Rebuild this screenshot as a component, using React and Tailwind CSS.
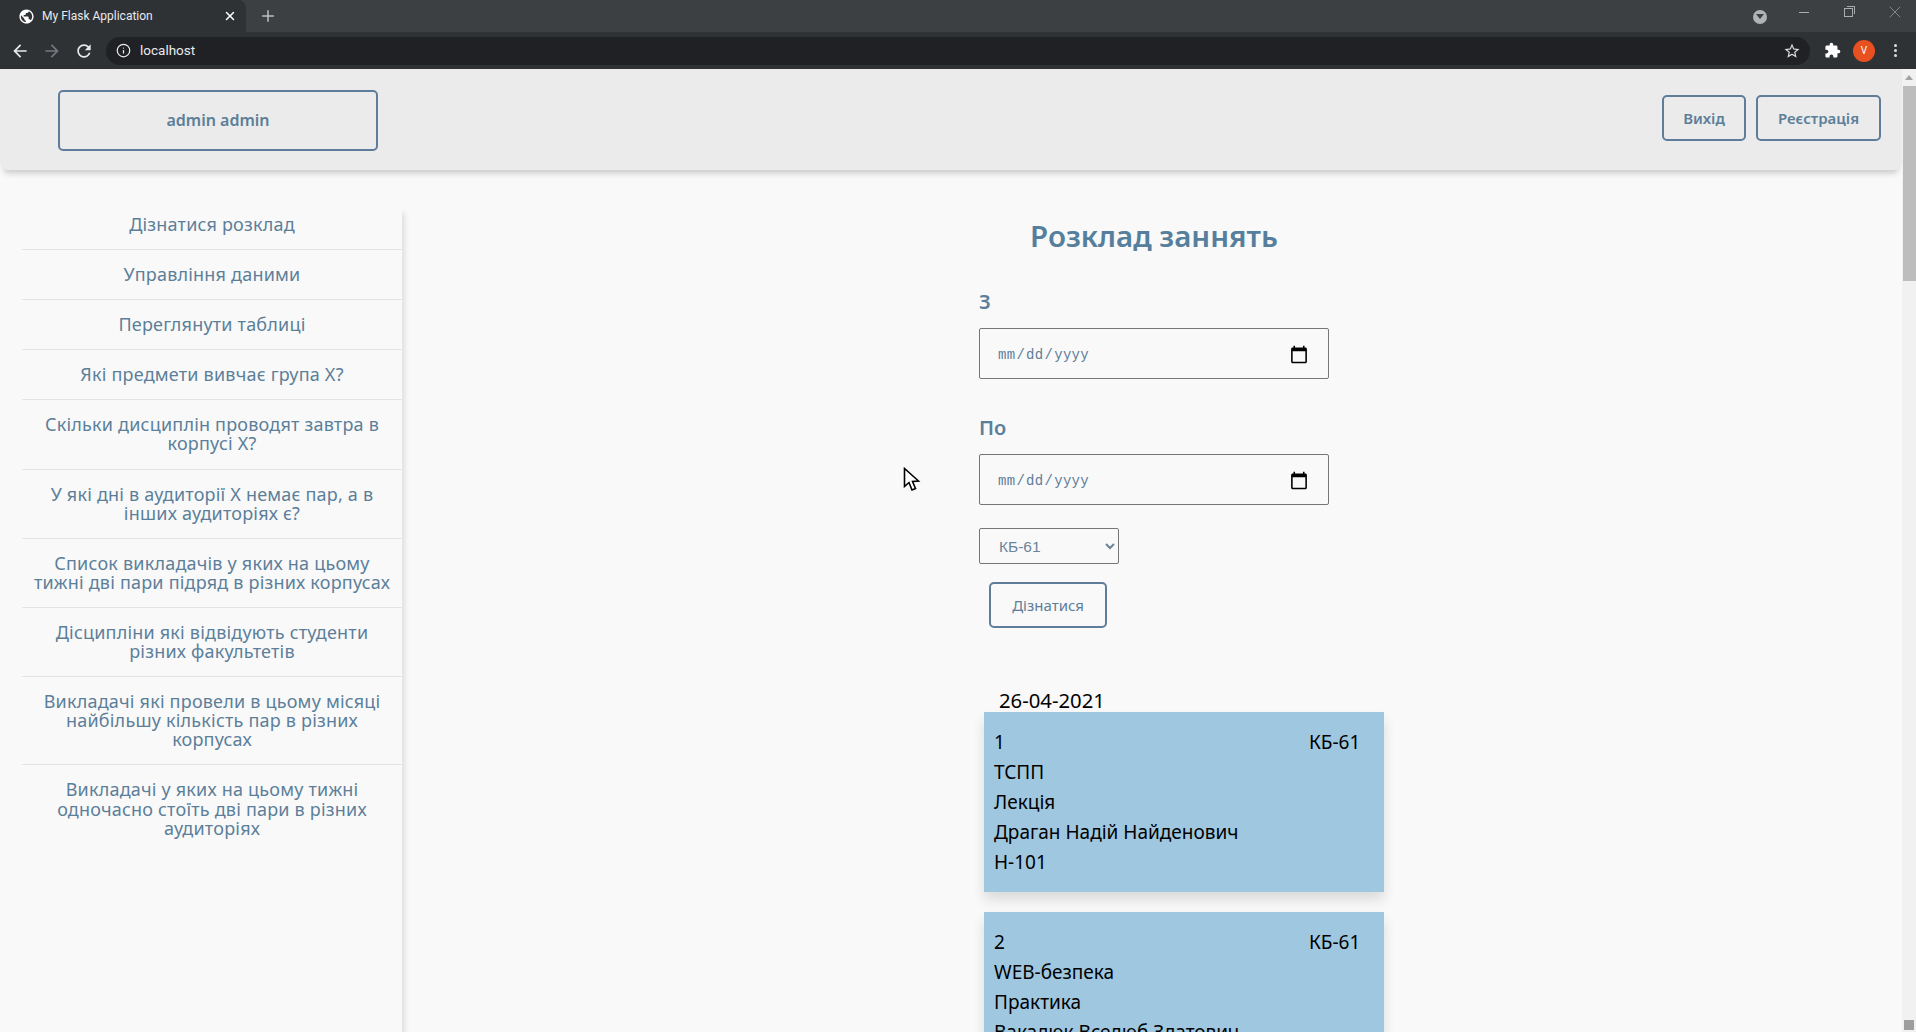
import React from "react";
import { Info, Plus, X } from "lucide-react";

const menu = [
  "Дізнатися розклад",
  "Управління даними",
  "Переглянути таблиці",
  "Які предмети вивчає група Х?",
  "Скільки дисциплін проводят завтра в корпусі Х?",
  "У які дні в аудиторії Х немає пар, а в інших аудиторіях є?",
  "Список викладачів у яких на цьому тижні дві пари підряд в різних корпусах",
  "Дісципліни які відвідують студенти різних факультетів",
  "Викладачі які провели в цьому місяці найбільшу кількість пар в різних корпусах",
  "Викладачі у яких на цьому тижні одночасно стоїть дві пари в різних аудиторіях",
];

const lessons = [
  { num: "1", lines: ["ТСПП", "Лекція", "Драган Надій Найденович", "Н-101"] },
  { num: "2", lines: ["WEB-безпека", "Практика", "Вакалюк Вселюб Златович", "Н-101"] },
];

const Glyph = ({ d, className }) => (
  <svg viewBox="0 0 24 24" className={className} fill="currentColor">
    <path d={d} />
  </svg>
);

const ARROW = "M20 11H7.83l5.59-5.59L12 4l-8 8 8 8 1.41-1.41L7.83 13H20v-2z";
const REFRESH = "M17.65 6.35C16.2 4.9 14.21 4 12 4c-4.42 0-7.99 3.58-7.99 8s3.57 8 7.99 8c3.73 0 6.84-2.55 7.73-6h-2.08c-.82 2.33-3.04 4-5.65 4-3.31 0-6-2.69-6-6s2.69-6 6-6c1.66 0 3.14.69 4.22 1.78L13 11h7V4l-2.35 2.35z";
const GLOBE = "M12 2C6.48 2 2 6.48 2 12s4.48 10 10 10 10-4.48 10-10S17.52 2 12 2zm-1 17.93c-3.95-.49-7-3.85-7-7.93 0-.62.08-1.21.21-1.79L9 15v1c0 1.1.9 2 2 2v1.93zm6.9-2.54c-.26-.81-1-1.39-1.9-1.39h-1v-3c0-.55-.45-1-1-1H8v-2h2c.55 0 1-.45 1-1V7h2c1.1 0 2-.9 2-2v-.41c2.93 1.19 5 4.06 5 7.41 0 2.08-.8 3.97-2.1 5.39z";
const PUZZLE = "M20.5 11H19V7c0-1.1-.9-2-2-2h-4V3.5C13 2.12 11.88 1 10.5 1S8 2.12 8 3.5V5H4c-1.1 0-1.99.9-1.99 2v3.8H3.5c1.49 0 2.7 1.21 2.7 2.7s-1.21 2.7-2.7 2.7H2V20c0 1.1.9 2 2 2h3.8v-1.5c0-1.49 1.21-2.7 2.7-2.7 1.49 0 2.7 1.21 2.7 2.7V22H17c1.1 0 2-.9 2-2v-4h1.5c1.38 0 2.5-1.12 2.5-2.5S21.88 11 20.5 11z";
const STAR = "M22 9.24l-7.19-.62L12 2 9.19 8.63 2 9.24l5.46 4.73L5.82 21 12 17.27 18.18 21l-1.63-7.03L22 9.24zM12 15.4l-3.76 2.27 1-4.28-3.32-2.88 4.38-.38L12 6.1l1.71 4.04 4.38.38-3.32 2.88 1 4.28L12 15.4z";

const BrowserChrome = () => (
  <div className="font-['Roboto',sans-serif] text-white">
    <div className="h-8 bg-[#3c4043] flex items-end">
      <div className="w-[246px] h-[32px] bg-[#2f3235] rounded-tr-lg flex items-center pl-[18px] pr-[9px] gap-[7px]">
        <Glyph d={GLOBE} className="w-[17px] h-[17px] text-white shrink-0" />
        <span className="text-[12px] flex-1 text-[#e8eaed] whitespace-nowrap">My Flask Application</span>
        <X className="w-[14px] h-[14px]" strokeWidth={2.5} />
      </div>
      <Plus className="w-[18px] h-[18px] ml-[13px] mb-[7px] text-[#bdc1c6]" strokeWidth={2} />
      <div className="ml-auto h-8 flex items-center text-[#a9abae]">
        <div className="w-[14px] h-[14px] rounded-full bg-[#b0b2b5] flex items-center justify-center mr-[32px] mt-[1px]">
          <div className="w-0 h-0 border-l-[4px] border-r-[4px] border-t-[5px] border-l-transparent border-r-transparent border-t-[#3c4043]" />
        </div>
        <div className="w-[10px] h-px bg-[#a9abae] mr-[35px] -mt-[8px]" />
        <div className="relative w-[9px] h-[9px] border border-[#a9abae] mr-[32px] -mt-[7px]">
          <div className="absolute -top-[3px] -right-[3px] w-[8px] h-[8px] border-t border-r border-[#a9abae]" />
        </div>
        <X className="w-[20px] h-[20px] mr-[11px] -mt-[8px]" strokeWidth={0.8} />
      </div>
    </div>
    <div className="h-[37px] bg-[#2f3235] flex items-center">
      <Glyph d={ARROW} className="w-[20px] h-[20px] ml-[10px] text-[#e8eaed]" />
      <Glyph d={ARROW} className="w-[20px] h-[20px] ml-[12px] text-[#75787c] rotate-180" />
      <Glyph d={REFRESH} className="w-[20px] h-[20px] ml-[12px] text-[#e8eaed]" />
      <div className="ml-[12px] w-[1704px] h-[28px] rounded-full bg-[#202124] flex items-center pl-[10px]">
        <Info className="w-[15px] h-[15px] text-[#e8eaed]" strokeWidth={2} />
        <span className="ml-[9px] text-[13.5px] text-[#e8eaed]">localhost</span>
        <Glyph d={STAR} className="w-[18px] h-[18px] ml-auto mr-[9px] text-[#dadce0]" />
      </div>
      <Glyph d={PUZZLE} className="w-[17px] h-[17px] ml-[14px] text-white" />
      <div className="ml-[12px] w-[22px] h-[22px] rounded-full bg-[#e8501f] flex items-center justify-center text-[10px]">V</div>
      <div className="ml-[19px] flex flex-col gap-[2px]">
        <div className="w-[3px] h-[3px] rounded-full bg-[#dadce0]" />
        <div className="w-[3px] h-[3px] rounded-full bg-[#dadce0]" />
        <div className="w-[3px] h-[3px] rounded-full bg-[#dadce0]" />
      </div>
    </div>
  </div>
);

const Header = () => (
  <header className="h-[101px] bg-[#ebebeb] rounded-b-lg shadow-[0_7px_6px_-4px_rgba(0,0,0,0.2)] flex items-center pl-[58px] pr-[21px] font-semibold text-[#5c7f99] relative">
    <div className="w-[320px] h-[61px] mt-[1px] border-2 border-[#5f7d9a] rounded-[5px] flex items-center justify-center text-[16px]">admin admin</div>
    <div className="ml-auto flex gap-[10px] -mt-[3px]">
      <button className="w-[84px] h-[46px] border-2 border-[#5f7d9a] rounded-[5px] text-[15px] font-semibold">Вихід</button>
      <button className="w-[125px] h-[46px] border-2 border-[#5f7d9a] rounded-[5px] text-[15px] font-semibold">Реєстрація</button>
    </div>
  </header>
);

const Sidebar = () => (
  <aside className="w-[380px] ml-[22px] mt-[30px] shrink-0 shadow-[4px_12px_5px_-1px_rgba(0,0,0,0.1)] text-center text-[18px] leading-[19.1px] tracking-[0.2px] text-[#5c7f99]">
    {menu.map((item, i) => (
      <div key={item} className={`px-[8px] py-[15px] ${i < menu.length - 1 ? "border-b border-[#e2e5e6]" : "pb-[400px]"}`}>
        {item}
      </div>
    ))}
  </aside>
);

const DateField = ({ label }) => (
  <div>
    <label className="block text-[20px] leading-[24px] font-semibold text-[#5c7f99] mb-[14px]">{label}</label>
    <input
      type="date"
      className="block w-[350px] h-[51px] px-[17px] pt-[3px] border border-[#767676] rounded-[2px] bg-[#f9f9f9] text-[14px] tracking-[0.3px] font-['Liberation_Mono',monospace] text-[#5f7d9a] [&::-webkit-calendar-picker-indicator]:w-[20px] [&::-webkit-calendar-picker-indicator]:h-[20px] [&::-webkit-calendar-picker-indicator]:mr-[2px] [&::-webkit-calendar-picker-indicator]:p-0"
    />
  </div>
);

const LessonCard = ({ lesson }) => (
  <div className="w-[400px] h-[180px] ml-[5px] mb-[20px] px-[10px] py-[15px] bg-[#9fc7e0] shadow-[0_8px_12px_rgba(0,0,0,0.12)] text-[19px] leading-[30px] text-black shrink-0">
    <div className="flex">
      <span>{lesson.num}</span>
      <span className="ml-[304px]">КБ-61</span>
    </div>
    {lesson.lines.map((line) => (
      <div key={line}>{line}</div>
    ))}
  </div>
);

const Schedule = () => (
  <main className="ml-[577px] w-[420px] shrink-0">
    <h1 className="w-[350px] mt-[44px] text-center text-[29.5px] leading-[44px] font-semibold text-[#557f9c] whitespace-nowrap">Розклад заннять</h1>
    <div className="mt-[32px] flex flex-col gap-[37px]">
      <DateField label="З" />
      <DateField label="По" />
    </div>
    <select className="block mt-[23px] w-[140px] h-[36px] pl-[15px] border border-[#767676] rounded-[2px] bg-[#f9f9f9] text-[15.5px] font-['Liberation_Sans',sans-serif] text-[#6b8599]">
      <option>КБ-61</option>
    </select>
    <button className="block mt-[18px] ml-[10px] w-[118px] h-[46px] border-2 border-[#5f7d9a] rounded-[5px] text-[15px] text-[#5f7d9a]">Дізнатися</button>
    <div className="mt-[61px] ml-[20px] text-[20.3px] leading-[23px] text-black">26-04-2021</div>
    {lessons.map((lesson) => (
      <LessonCard key={lesson.num} lesson={lesson} />
    ))}
  </main>
);

const Scrollbar = () => (
  <div className="absolute top-[69px] right-0 bottom-0 w-[14px] bg-[#f1f1f1] flex flex-col items-center">
    <div className="mt-[6px] w-0 h-0 border-l-[4px] border-r-[4px] border-b-[5px] border-l-transparent border-r-transparent border-b-[#a3a3a3]" />
    <div className="mt-[6px] w-[13px] h-[195px] ml-[1px] bg-[#bdbdbd]" />
    <div className="mt-auto mb-[2px] w-[10px] h-[10px] bg-[#9e9e9e]" />
  </div>
);

const Cursor = () => (
  <svg viewBox="0 0 18 26" className="absolute left-[903px] top-[467px] w-[18px] h-[26px]">
    <path d="M1.5 1.5 L1.5 19.5 L6 15.5 L9 23 L12.5 21.5 L9.5 14.5 L15.5 14 Z" fill="#fff" stroke="#000" strokeWidth="1.6" strokeLinejoin="miter" />
  </svg>
);

export default function App() {
  return (
    <div className="relative h-screen overflow-hidden bg-[#f9f9f9] font-['Noto_Sans',sans-serif]">
      <BrowserChrome />
      <div className="pr-[14px]">
        <Header />
        <div className="flex">
          <Sidebar />
          <Schedule />
        </div>
      </div>
      <Scrollbar />
      <Cursor />
    </div>
  );
}
